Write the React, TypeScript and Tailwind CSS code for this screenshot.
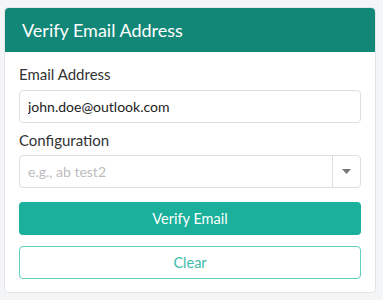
export default function App() {
  return (
    <div className="min-h-[300px] w-[383px] bg-[#f4f5f7] pl-[4px] pr-[7px] pt-[7px] font-['Lato','Noto_Sans',sans-serif]">
      <div className="rounded-[4px] border border-[#e3e5e8] bg-white">
        <div className="flex h-[44px] items-center rounded-t-[4px] bg-[#128777] px-[17px]">
          <h1 className="text-[18px] text-white">Verify Email Address</h1>
        </div>
        <div className="flex flex-col px-[14px] pb-[13px] pt-[11px]">
          <label className="mb-[4px] text-[15px] text-[#333]">Email Address</label>
          <input
            defaultValue="john.doe@outlook.com"
            className="h-[33px] rounded-[4px] border border-[#dcdee2] px-[8px] text-[14px] text-[#222] outline-none"
          />
          <label className="mb-[4px] mt-[6px] text-[15px] text-[#333]">Configuration</label>
          <div className="flex h-[33px] items-center rounded-[4px] border border-[#dcdee2]">
            <span className="flex-1 px-[8px] text-[14px] text-[#bcbcbc]">e.g., ab test2</span>
            <span className="flex h-full w-[28px] items-center justify-center border-l border-[#dcdee2]">
              <svg width="9" height="5" viewBox="0 0 9 5">
                <path d="M0 0h9L4.5 5z" fill="#777" />
              </svg>
            </span>
          </div>
          <button className="mt-[14px] h-[33px] rounded-[4px] bg-[#1ab09b] text-[14.5px] text-white">
            Verify Email
          </button>
          <button className="mt-[11px] h-[33px] rounded-[4px] border border-[#5fcfc0] bg-white text-[14.5px] text-[#40bcab]">
            Clear
          </button>
        </div>
      </div>
    </div>
  )
}
